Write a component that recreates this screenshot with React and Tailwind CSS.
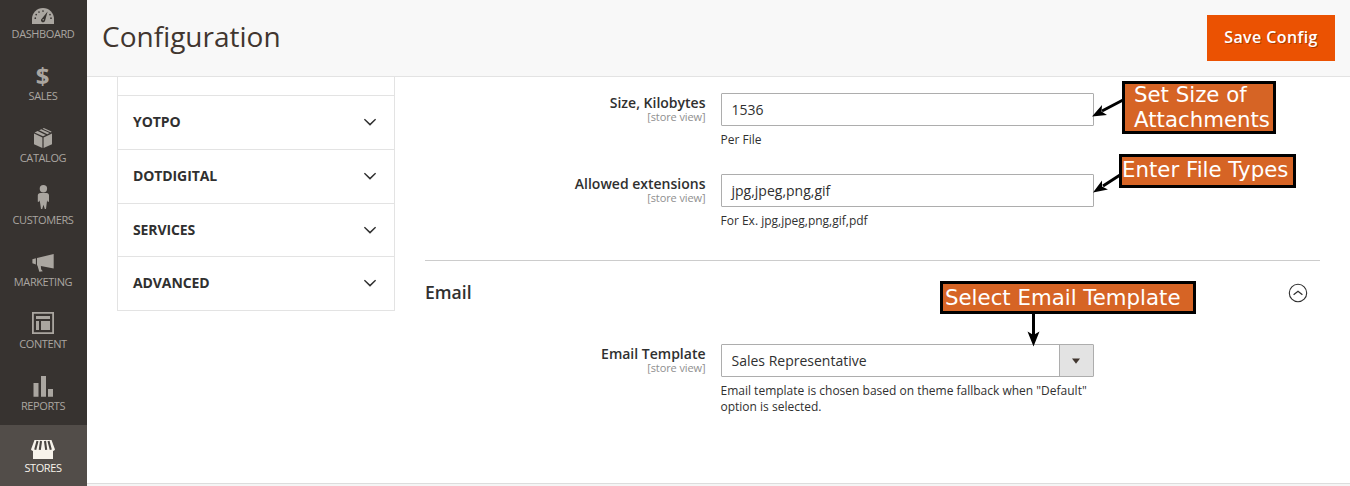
import React from "react";

function DashboardIcon() {
  return (
    <>
      <path d="M7 28V23a11 11 0 0 1 22 0V28z" />
      <g fill="#373330">
        <circle cx="10.3" cy="22.2" r=".85" />
        <circle cx="11.2" cy="18.6" r=".85" />
        <circle cx="14" cy="16" r=".85" />
        <circle cx="18" cy="15" r=".85" />
        <circle cx="25" cy="18.6" r=".85" />
        <circle cx="26" cy="22.2" r=".85" />
        <path d="M22.6 15.6 20 25a2.1 2.1 0 1 1-3-2.6z" />
      </g>
      <circle cx="18.2" cy="23.8" r=".7" />
    </>
  );
}

function SalesIcon() {
  return (
    <text x="17.6" y="27" textAnchor="middle" className="font-['Open_Sans',sans-serif] text-[24px] font-bold">
      $
    </text>
  );
}

function CatalogIcon() {
  return (
    <>
      <path d="M9 13.600 17.400 17.400V28L9 24.200z" />
      <path d="M27 13.600 18.600 17.400V28L27 24.200z" />
      <path d="M9.600 12.400 12.600 11 20.800 14.900 18 16.300z" />
      <path d="M14.200 10.300 16.300 9.300 24.600 13.100 22.400 14.200z" />
      <path d="M17.600 8.700 18.800 8 26.500 11.600 26 12.400z" />
    </>
  );
}

function CustomersIcon() {
  return (
    <>
      <circle cx="18.4" cy="6.7" r="3.7" />
      <path d="M15.500 11h6c1.700 0 2.500.9 2.500 2.400v6.400h-1.300l-.6-1.500L21 27h-1.200l-1.300-4.200L17.200 27H16l-1.300-8.700-.6 1.500h-1.300v-6.400c0-1.500 1-2.400 2.700-2.400z" />
    </>
  );
}

function MarketingIcon() {
  return (
    <>
      <path d="M28.700 10V24.500L12 21.200V14z" />
      <path d="M7.400 15.200 10.900 14.200V20.400L7.400 19.200z" />
      <path d="M12.300 21h3.500l.3 4.300 1.700 1.900-3.500.6z" />
    </>
  );
}

function ContentIcon() {
  return (
    <>
      <path fillRule="evenodd" d="M7 6h22v22H7zM8.800 7.800v18.400h18.400V7.800z" />
      <path d="M11 10h14v3H11zM11 15h3v9h-3zM16 15h9v9h-9z" />
    </>
  );
}

function ReportsIcon() {
  return <path d="M8.500 15h5v13.700h-5zM16 8h5v20.700h-5zM23 21h5v7.700h-5z" />;
}

function StoresIcon() {
  return (
    <>
      <path d="M9.500 10h17L30 19.500a2.900 2.900 0 0 1-2 1.500V29H8v-8a2.900 2.900 0 0 1-2-1.500z" />
      <g stroke="#484440" strokeWidth="2.100" fill="none">
        <path d="M12.500 11 10.200 19.800M16 11 14.800 19.800M20 11 21.200 19.800M23.500 11 25.800 19.800" />
      </g>
    </>
  );
}

const menu = [
  ["DASHBOARD", DashboardIcon],
  ["SALES", SalesIcon],
  ["CATALOG", CatalogIcon],
  ["CUSTOMERS", CustomersIcon],
  ["MARKETING", MarketingIcon],
  ["CONTENT", ContentIcon],
  ["REPORTS", ReportsIcon],
  ["STORES", StoresIcon],
];

function Sidebar() {
  return (
    <nav className="flex w-[87px] shrink-0 flex-col bg-[#373330]">
      <div className="-mt-[9px]">
        {menu.map(([label, Icon]) => {
          const active = label === "STORES";
          return (
            <a
              key={label}
              className={
                "flex h-[62px] flex-col items-center pt-[5px] pr-px " +
                (active ? "bg-[#524d49] text-[#f7f3eb]" : "text-[#aaa6a0]")
              }
            >
              <svg className="h-[30px] w-9 shrink-0 overflow-visible" viewBox="0 0 36 30" fill="currentColor">
                <Icon />
              </svg>
              <span className="text-[11px] leading-[15px] tracking-[-0.4px]">{label}</span>
            </a>
          );
        })}
      </div>
    </nav>
  );
}

function SectionRow({ label, height }) {
  return (
    <div className={"flex items-center justify-between border-b border-[#e3e3e3] pr-[18px] pl-[15px] " + height}>
      <span className="text-[14px] font-bold leading-5 tracking-[-0.1px] text-[#303030]">{label}</span>
      <svg className="h-3 w-3" viewBox="0 0 12 12" fill="none" stroke="#303030" strokeWidth="1.5">
        <path d="M.4 3.200 6 8.600 11.600 3.200" />
      </svg>
    </div>
  );
}

function Field({ label, note, children }) {
  return (
    <div className="flex">
      <div className="w-[280.5px] shrink-0 text-right">
        <div className="text-[14px] font-semibold leading-[19px] text-[#303030]">{label}</div>
        <div className="text-[11px] leading-[9px] tracking-[-0.1px] text-[#8f8f8f]">[store view]</div>
      </div>
      <div className="ml-[15px] w-[374px]">
        {children}
        <p className="mt-[6px] text-[12px] leading-4 text-[#303030]">{note}</p>
      </div>
    </div>
  );
}

function TextInput({ value }) {
  return (
    <div className="flex h-[33px] w-[373px] items-center rounded-[1px] border border-[#adadad] px-[10px] text-[14px] text-[#303030]">
      {value}
    </div>
  );
}

function Annotations() {
  return (
    <div className="absolute inset-0 font-['DejaVu_Sans',sans-serif] text-white">
      <svg className="absolute inset-0 h-[486px] w-[1350px]" viewBox="0 0 1350 486" stroke="#000" strokeWidth="3">
        <path d="M1123 100 1102 111M1120 175 1103 186M1033.500 313V337" />
        <g stroke="none">
          <path d="M1092 116.500 1102 105 1101.500 111.500 1107 115z" />
          <path d="M1093 192.500 1102 180.500 1102 186.500 1108 189.500z" />
          <path d="M1033.500 346.500 1027.500 331.500 1033.500 335 1039.500 331.500z" />
        </g>
      </svg>
      <div className="absolute left-[1122px] top-[81px] h-[53px] w-[154px] border-[3px] border-black bg-[#d66425] pl-[9px] text-[21.3px] leading-[25px] whitespace-nowrap">
        <div className="-mt-[2px]">Set Size of</div>
        <div>Attachments</div>
      </div>
      <div className="absolute left-[1119px] top-[154px] h-[34px] w-[177px] border-[3px] border-black bg-[#d66425] text-[21.3px] leading-[25px] whitespace-nowrap">
        Enter File Types
      </div>
      <div className="absolute left-[940px] top-[281px] h-[33px] w-[256px] border-[3px] border-black bg-[#d66425] pl-[2px] text-[21.3px] leading-[27px] whitespace-nowrap">
        Select Email Template
      </div>
    </div>
  );
}

export default function App() {
  return (
    <div className="relative flex h-[486px] w-[1350px] overflow-hidden bg-white font-['Open_Sans',sans-serif]">
      <Sidebar />
      <div className="flex flex-1 flex-col">
        <header className="flex h-[77px] items-center justify-between border-b border-[#e3e3e3] bg-[#f8f8f8] pr-[15px] pl-[15px]">
          <h1 className="pb-1 text-[28px] leading-9 text-[#41362f]">Configuration</h1>
          <button className="h-[46px] w-[128px] bg-[#eb5202] pb-[2px] text-[16px] font-semibold tracking-[0.4px] text-white [text-shadow:1px_1px_0_rgba(0,0,0,0.3)]">
            Save Config
          </button>
        </header>
        <main className="flex h-[406px] shrink-0 pl-[30px]">
          <aside className="h-[234px] w-[278px] shrink-0 border-x border-[#e3e3e3]">
            <div className="h-[19px] border-b border-[#e3e3e3]" />
            <SectionRow label="YOTPO" height="h-[54px] pb-px" />
            <SectionRow label="DOTDIGITAL" height="h-[54px] pb-px" />
            <SectionRow label="SERVICES" height="h-[53px]" />
            <SectionRow label="ADVANCED" height="h-[54px] pb-px" />
          </aside>
          <div className="ml-[30px] w-[895px] pt-4">
            <div className="flex flex-col gap-[26px]">
              <Field label="Size, Kilobytes" note="Per File">
                <TextInput value="1536" />
              </Field>
              <Field label="Allowed extensions" note="For Ex. jpg,jpeg,png,gif,pdf">
                <TextInput value="jpg,jpeg,png,gif" />
              </Field>
            </div>
            <section className="mt-[31px] border-t border-[#cccccc]">
              <div className="flex h-[64px] items-center justify-between pr-[12.5px]">
                <h2 className="pb-[3px] text-[17.6px] font-semibold leading-6 text-[#303030]">Email</h2>
                <svg className="h-5 w-5" viewBox="0 0 20 20" fill="none" stroke="#303030" strokeWidth="1.1">
                  <circle cx="10" cy="10" r="8.700" />
                  <path d="M5.600 11.700 10 8.300 14.400 11.700" strokeWidth="1.300" />
                </svg>
              </div>
              <div className="pt-[19px]">
                <Field
                  label="Email Template"
                  note={'Email template is chosen based on theme fallback when "Default" option is selected.'}
                >
                  <div className="flex h-[33px] w-[373px] rounded-[1px] border border-[#adadad]">
                    <span className="flex flex-1 items-center pl-[10px] text-[14px] text-[#303030]">
                      Sales Representative
                    </span>
                    <span className="flex w-[34px] items-center justify-center border-l border-[#adadad] bg-[#e3e3e3]">
                      <svg className="h-[6px] w-2" viewBox="0 0 8 6" fill="#41362f">
                        <path d="M0 .5h8L4 5.800z" />
                      </svg>
                    </span>
                  </div>
                </Field>
              </div>
            </section>
          </div>
        </main>
        <footer className="h-[3px] border-t border-[#dddddd] bg-[#f5f5f5]" />
      </div>
      <Annotations />
    </div>
  );
}
